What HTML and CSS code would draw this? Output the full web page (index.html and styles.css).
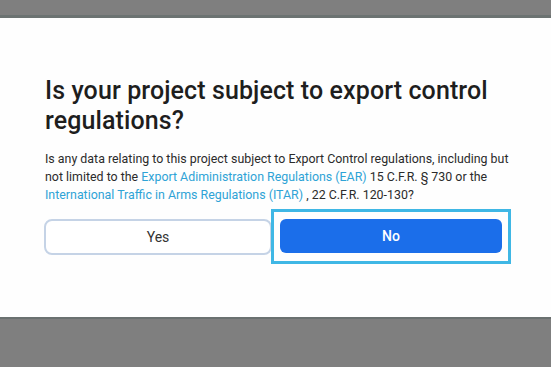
FILE: index.html
```html
<!DOCTYPE html>
<html lang="en">
<head>
    <meta charset="UTF-8">
    <meta name="viewport" content="width=device-width, initial-scale=1.0">
    <title>Export Control</title>
    <link rel="stylesheet" href="styles.css">
</head>
<body>
    <div class="backdrop-top"></div>
    <div class="modal">
        <h1 class="modal-title">Is your project subject to export control regulations?</h1>
        <p class="modal-text">
            Is any data relating to this project subject to Export Control regulations, including but
            not limited to the <a href="#">Export Adiministration Regulations (EAR)</a> 15 C.F.R. &sect; 730 or the
            <a href="#">International Traffic in Arms Regulations (ITAR)</a> , 22 C.F.R. 120-130?
        </p>
        <div class="answers">
            <button class="btn btn-yes">Yes</button>
            <div class="focus-ring">
                <button class="btn btn-no">No</button>
            </div>
        </div>
    </div>
    <div class="backdrop-bottom"></div>
</body>
</html>
```

FILE: styles.css
```css
html, body {
    margin: 0;
    height: 100%;
}

body {
    background: #7f7f7f;
    font-family: Roboto, "Liberation Sans", Arial, sans-serif;
    color: #212121;
    overflow: hidden;
}

.backdrop-top {
    height: 15px;
    border-bottom: 3px solid #6c7372;
}

.modal {
    background: #fefefe;
    height: 301px;
    box-sizing: border-box;
    padding: 58px 36px 0 45px;
    border-bottom: 2px solid #6a7170;
}

.modal-title {
    margin: 0;
    font-size: 25px;
    line-height: 30px;
    font-weight: 500;
    color: #1e1e1e;
    letter-spacing: 0.1px;
}

.modal-text {
    margin: 14px 0 0;
    font-size: 12.4px;
    line-height: 18px;
    color: #2b2b2b;
}

.modal-text a {
    color: #2ea3d6;
    text-decoration: none;
}

.answers {
    display: flex;
    align-items: center;
    margin-top: 5px;
}

.btn {
    font-family: inherit;
    font-size: 14px;
    height: 36px;
    border-radius: 8px;
    cursor: pointer;
}

.btn-yes {
    width: 228px;
    margin-left: -1px;
    margin-right: -1px;
    background: #fff;
    border: 2px solid #c5d3e6;
    color: #333;
}

.focus-ring {
    border: 3px solid #3fb7e5;
    padding: 7px 6px 8px 6px;
}

.btn-no {
    display: block;
    width: 222px;
    height: 34px;
    border: none;
    border-radius: 6px;
    background: #1b6eea;
    color: #fff;
    font-weight: 500;
}
```
